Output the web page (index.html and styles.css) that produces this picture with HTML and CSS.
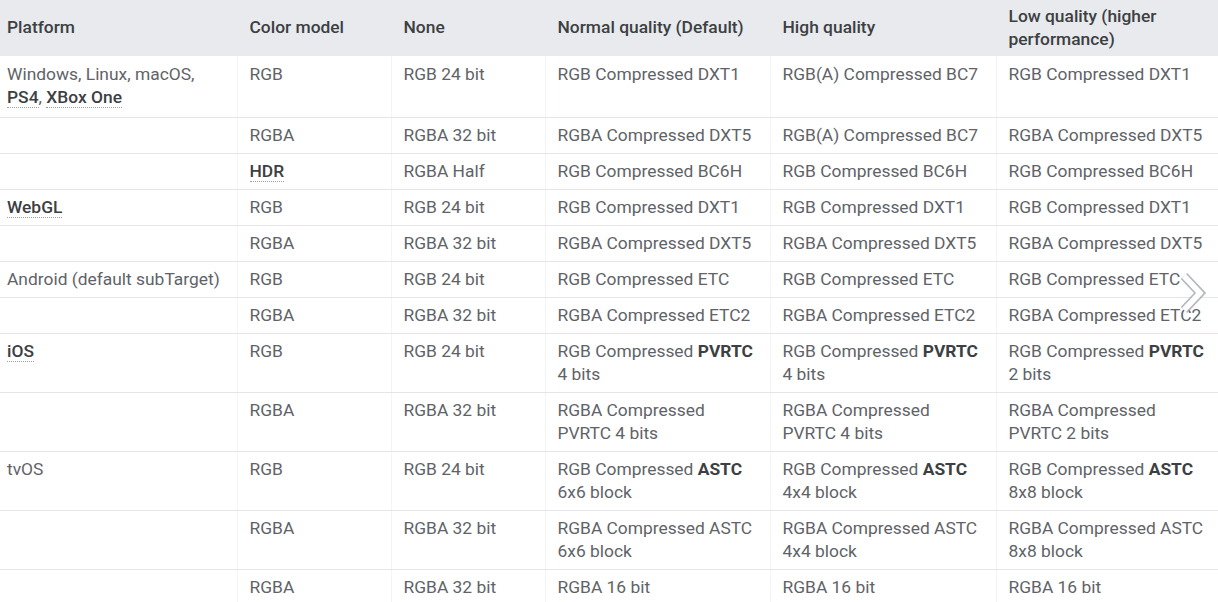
FILE: index.html
```html
<!DOCTYPE html>
<html>
<head>
<meta charset="utf-8">
<link rel="stylesheet" href="styles.css">
</head>
<body>
<div class="wrap">
<table class="formats">
  <colgroup>
    <col class="c1"><col class="c2"><col class="c3"><col class="c4"><col class="c5"><col class="c6">
  </colgroup>
  <thead>
    <tr>
      <th>Platform</th><th>Color model</th><th>None</th><th>Normal quality (Default)</th><th>High quality</th><th>Low quality (higher performance)</th>
    </tr>
  </thead>
  <tbody>
    <tr class="first">
      <td>Windows, Linux, macOS, <a class="lnk">PS4</a>, <a class="lnk">XBox One</a></td>
      <td>RGB</td><td>RGB 24 bit</td><td>RGB Compressed DXT1</td><td>RGB(A) Compressed BC7</td><td>RGB Compressed DXT1</td>
    </tr>
    <tr>
      <td></td><td>RGBA</td><td>RGBA 32 bit</td><td>RGBA Compressed DXT5</td><td>RGB(A) Compressed BC7</td><td>RGBA Compressed DXT5</td>
    </tr>
    <tr>
      <td></td><td><a class="lnk">HDR</a></td><td>RGBA Half</td><td>RGB Compressed BC6H</td><td>RGB Compressed BC6H</td><td>RGB Compressed BC6H</td>
    </tr>
    <tr>
      <td><a class="lnk">WebGL</a></td><td>RGB</td><td>RGB 24 bit</td><td>RGB Compressed DXT1</td><td>RGB Compressed DXT1</td><td>RGB Compressed DXT1</td>
    </tr>
    <tr>
      <td></td><td>RGBA</td><td>RGBA 32 bit</td><td>RGBA Compressed DXT5</td><td>RGBA Compressed DXT5</td><td>RGBA Compressed DXT5</td>
    </tr>
    <tr>
      <td>Android (default subTarget)</td><td>RGB</td><td>RGB 24 bit</td><td>RGB Compressed ETC</td><td>RGB Compressed ETC</td><td>RGB Compressed ETC</td>
    </tr>
    <tr>
      <td></td><td>RGBA</td><td>RGBA 32 bit</td><td>RGBA Compressed ETC2</td><td>RGBA Compressed ETC2</td><td>RGBA Compressed ETC2</td>
    </tr>
    <tr>
      <td><a class="lnk">iOS</a></td><td>RGB</td><td>RGB 24 bit</td><td>RGB Compressed <b>PVRTC</b> 4 bits</td><td>RGB Compressed <b>PVRTC</b> 4 bits</td><td>RGB Compressed <b>PVRTC</b> 2 bits</td>
    </tr>
    <tr>
      <td></td><td>RGBA</td><td>RGBA 32 bit</td><td>RGBA Compressed PVRTC 4 bits</td><td>RGBA Compressed PVRTC 4 bits</td><td>RGBA Compressed PVRTC 2 bits</td>
    </tr>
    <tr>
      <td>tvOS</td><td>RGB</td><td>RGB 24 bit</td><td>RGB Compressed <b>ASTC</b> 6x6 block</td><td>RGB Compressed <b>ASTC</b> 4x4 block</td><td>RGB Compressed <b>ASTC</b> 8x8 block</td>
    </tr>
    <tr>
      <td></td><td>RGBA</td><td>RGBA 32 bit</td><td>RGBA Compressed ASTC 6x6 block</td><td>RGBA Compressed ASTC 4x4 block</td><td>RGBA Compressed ASTC 8x8 block</td>
    </tr>
    <tr>
      <td></td><td>RGBA</td><td>RGBA 32 bit</td><td>RGBA 16 bit</td><td>RGBA 16 bit</td><td>RGBA 16 bit</td>
    </tr>
  </tbody>
</table>
<div class="scroll-next">
  <svg width="34" height="46" viewBox="0 0 34 46"><path d="M8 6 L24 23 L8 40" fill="none" stroke="#a8acb0" stroke-width="9" stroke-linejoin="miter" opacity="0.85"/><path d="M8 6 L24 23 L8 40" fill="none" stroke="#ffffff" stroke-width="5.5" stroke-linejoin="miter"/></svg>
</div>
</div>
</body>
</html>
```

FILE: styles.css
```css
html, body {
  margin: 0;
  padding: 0;
  background: #ffffff;
}

.wrap {
  position: relative;
  width: 1218px;
  height: 602px;
  overflow: hidden;
}

.formats {
  border-collapse: collapse;
  table-layout: fixed;
  width: 1220px;
  font-family: Roboto, "Liberation Sans", sans-serif;
  font-size: 17.4px;
  line-height: 23px;
  color: #5f6368;
}

.c1 { width: 237px; }
.c2 { width: 154px; }
.c3 { width: 154px; }
.c4 { width: 225px; }
.c5 { width: 226px; }
.c6 { width: 224px; }

.formats th {
  background: #e8eaed;
  color: #3c4043;
  font-weight: 500;
  text-align: left;
  vertical-align: middle;
  padding: 4px 12px 5px;
  height: 47px;
}

.formats td {
  vertical-align: top;
  padding: 6px 12px 6px;
  border-bottom: 1px solid #e3e5e8;
  border-left: 1px solid #f3f4f5;
}

.formats .first td {
  padding-top: 7px;
  padding-bottom: 8px;
}

.formats th + th {
  border-left: 1px solid #e8eaed;
}

.formats th:first-child,
.formats td:first-child {
  padding-left: 7px;
  border-left: none;
}

.lnk {
  color: #3c4043;
  font-weight: 500;
  text-decoration: none;
  border-bottom: 1px dotted #9aa0a6;
}

.formats b {
  color: #3c4043;
  font-weight: 700;
}

.scroll-next {
  position: absolute;
  left: 1176px;
  top: 270px;
  width: 34px;
  height: 46px;
}
```
